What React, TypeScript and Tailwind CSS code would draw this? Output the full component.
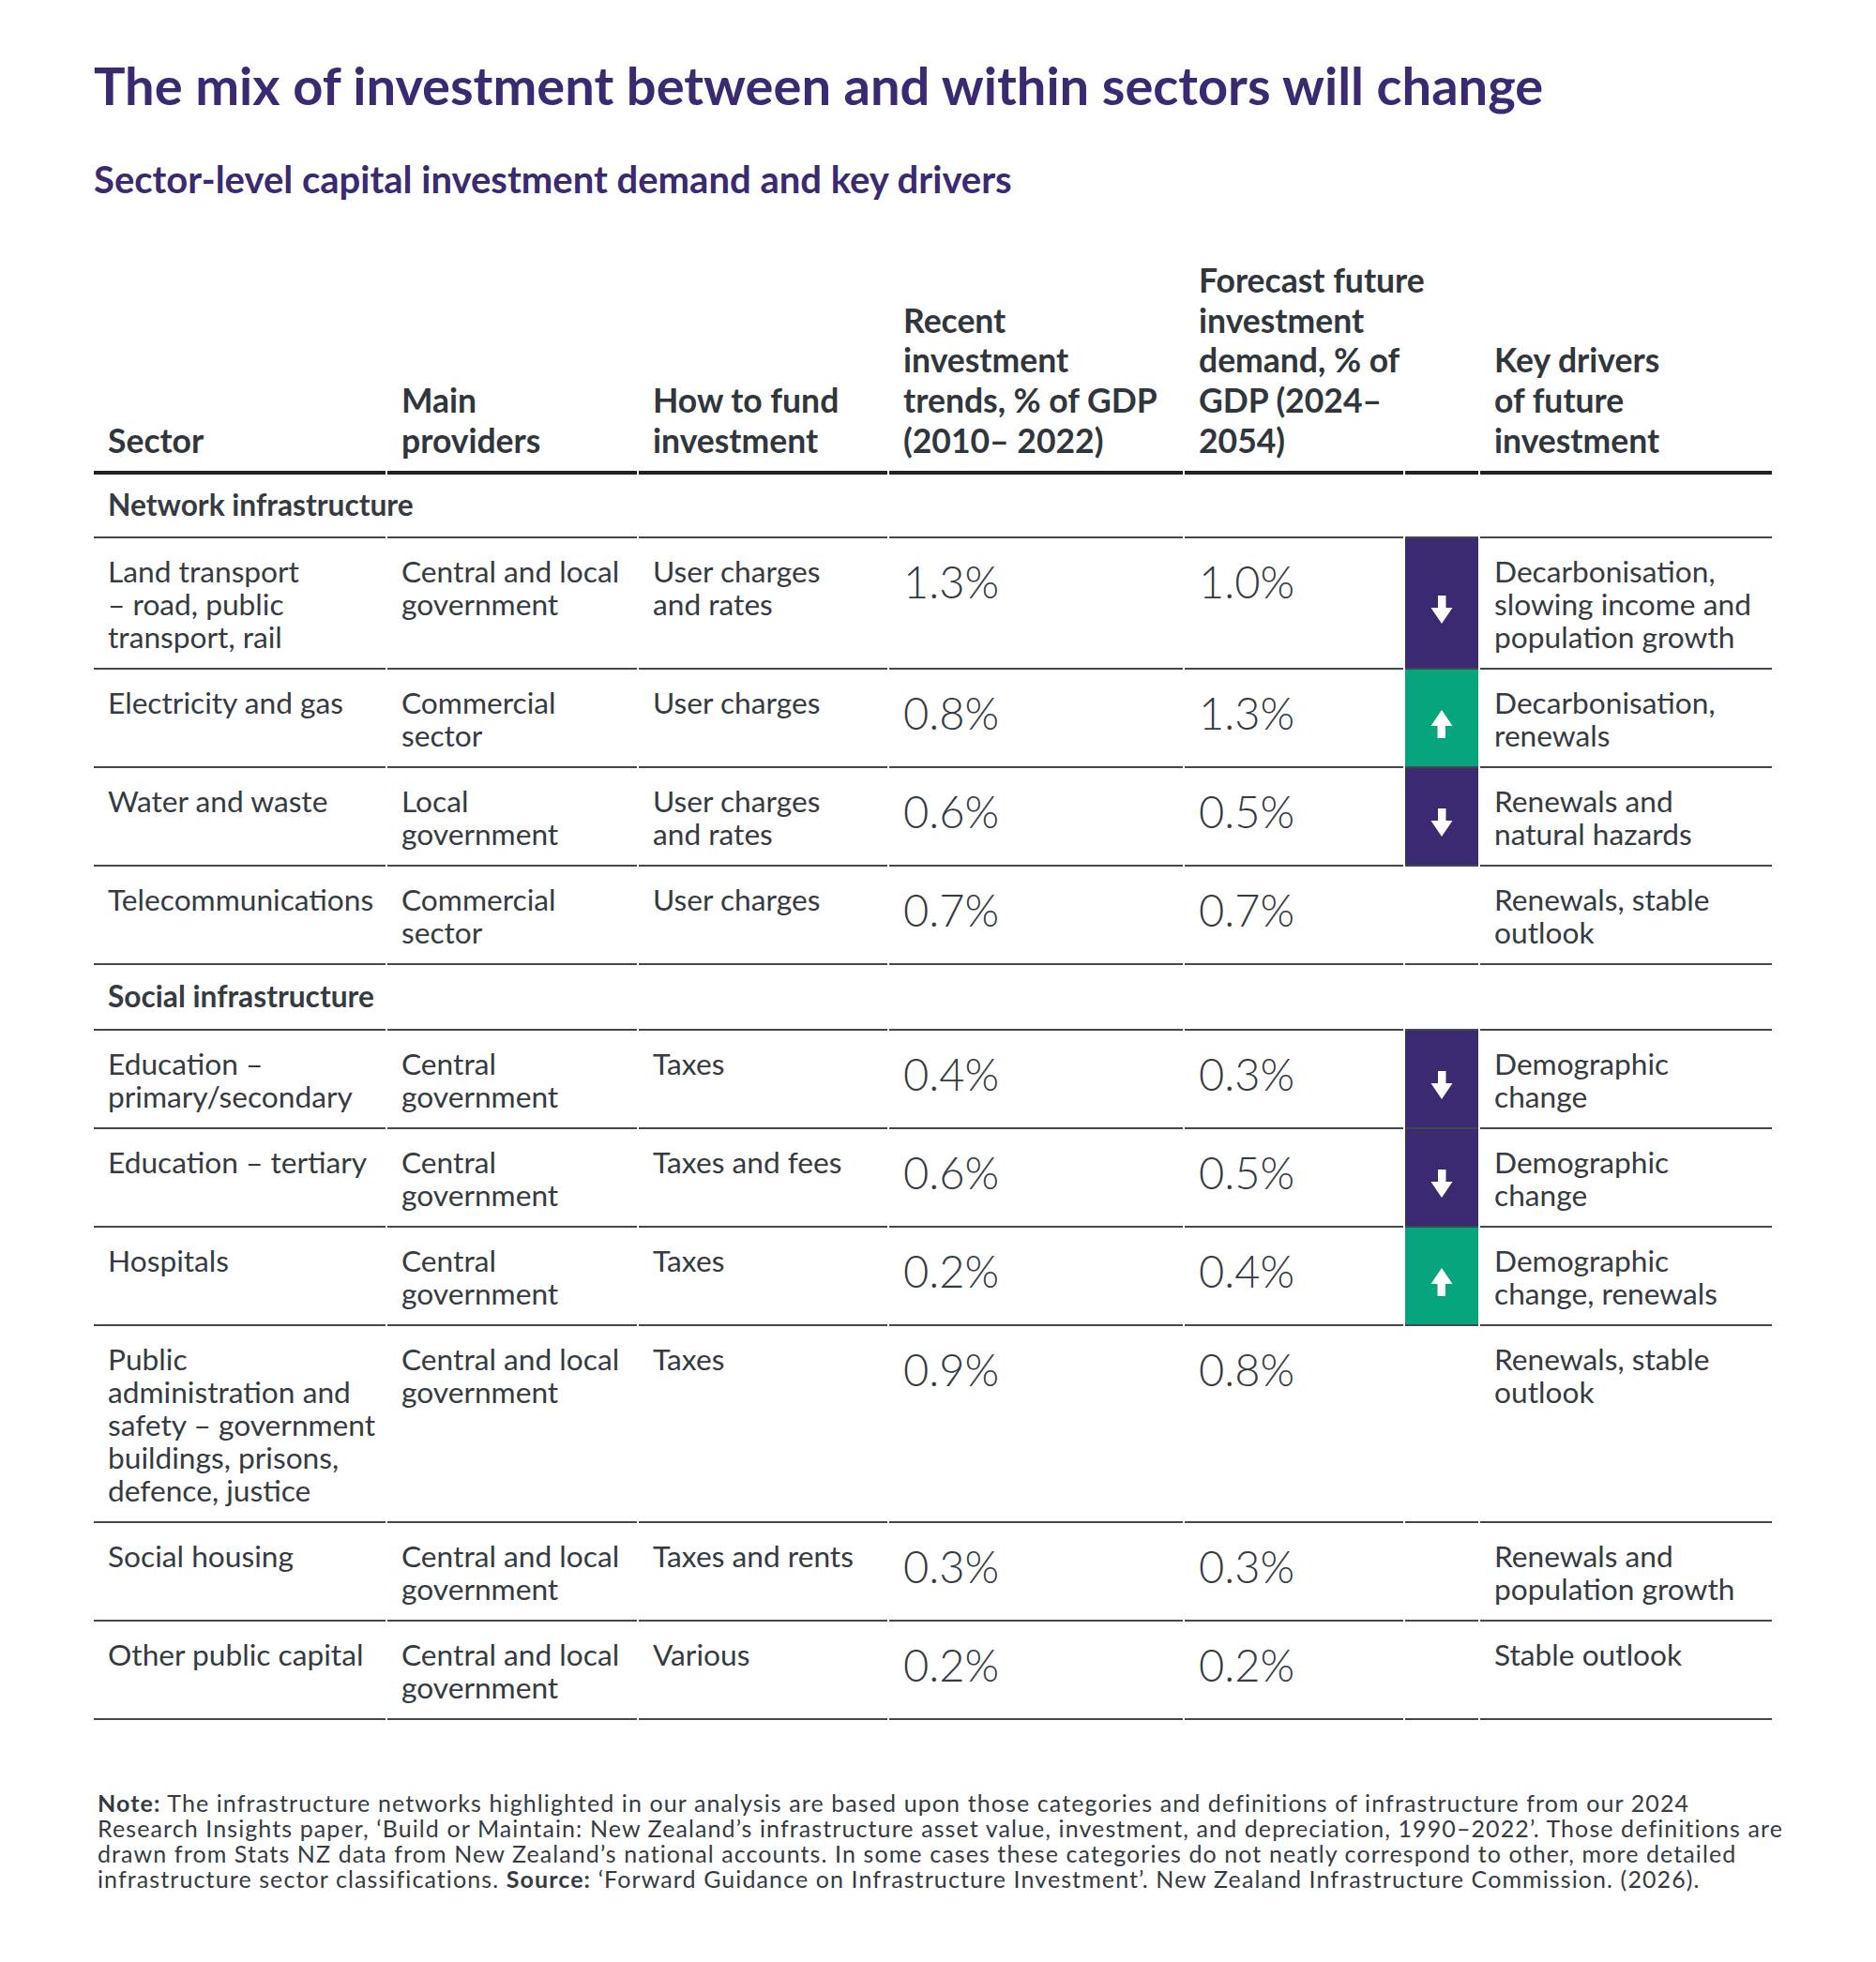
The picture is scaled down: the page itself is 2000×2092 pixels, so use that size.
import React from 'react';

type Trend = 'up' | 'down' | null;

type Row = {
  sector: string[];
  providers: string[];
  fund: string[];
  recent: string;
  forecast: string;
  trend: Trend;
  drivers: string[];
};

const network: Row[] = [
  {
    sector: ['Land transport', '– road, public', 'transport, rail'],
    providers: ['Central and local', 'government'],
    fund: ['User charges', 'and rates'],
    recent: '1.3%',
    forecast: '1.0%',
    trend: 'down',
    drivers: ['Decarbonisation,', 'slowing income and', 'population growth'],
  },
  {
    sector: ['Electricity and gas'],
    providers: ['Commercial', 'sector'],
    fund: ['User charges'],
    recent: '0.8%',
    forecast: '1.3%',
    trend: 'up',
    drivers: ['Decarbonisation,', 'renewals'],
  },
  {
    sector: ['Water and waste'],
    providers: ['Local', 'government'],
    fund: ['User charges', 'and rates'],
    recent: '0.6%',
    forecast: '0.5%',
    trend: 'down',
    drivers: ['Renewals and', 'natural hazards'],
  },
  {
    sector: ['Telecommunications'],
    providers: ['Commercial', 'sector'],
    fund: ['User charges'],
    recent: '0.7%',
    forecast: '0.7%',
    trend: null,
    drivers: ['Renewals, stable', 'outlook'],
  },
];

const social: Row[] = [
  {
    sector: ['Education –', 'primary/secondary'],
    providers: ['Central', 'government'],
    fund: ['Taxes'],
    recent: '0.4%',
    forecast: '0.3%',
    trend: 'down',
    drivers: ['Demographic', 'change'],
  },
  {
    sector: ['Education – tertiary'],
    providers: ['Central', 'government'],
    fund: ['Taxes and fees'],
    recent: '0.6%',
    forecast: '0.5%',
    trend: 'down',
    drivers: ['Demographic', 'change'],
  },
  {
    sector: ['Hospitals'],
    providers: ['Central', 'government'],
    fund: ['Taxes'],
    recent: '0.2%',
    forecast: '0.4%',
    trend: 'up',
    drivers: ['Demographic', 'change, renewals'],
  },
  {
    sector: ['Public', 'administration and', 'safety – government', 'buildings, prisons,', 'defence, justice'],
    providers: ['Central and local', 'government'],
    fund: ['Taxes'],
    recent: '0.9%',
    forecast: '0.8%',
    trend: null,
    drivers: ['Renewals, stable', 'outlook'],
  },
  {
    sector: ['Social housing'],
    providers: ['Central and local', 'government'],
    fund: ['Taxes and rents'],
    recent: '0.3%',
    forecast: '0.3%',
    trend: null,
    drivers: ['Renewals and', 'population growth'],
  },
  {
    sector: ['Other public capital'],
    providers: ['Central and local', 'government'],
    fund: ['Various'],
    recent: '0.2%',
    forecast: '0.2%',
    trend: null,
    drivers: ['Stable outlook'],
  },
];

const headers: string[][] = [
  ['Sector'],
  ['Main', 'providers'],
  ['How to fund', 'investment'],
  ['Recent', 'investment', 'trends, % of GDP', '(2010– 2022)'],
  ['Forecast future', 'investment', 'demand, % of', 'GDP (2024–', '2054)'],
  [],
  ['Key drivers', 'of future', 'investment'],
];

const grid = 'grid grid-cols-[311px_266px_265px_313px_233px_78px_311px] gap-x-[2px]';

function Lines({ lines }: { lines: string[] }) {
  return (
    <>
      {lines.map((l, i) => (
        <span key={i} className="block whitespace-nowrap">
          {l}
        </span>
      ))}
    </>
  );
}

function Arrow({ dir }: { dir: 'up' | 'down' }) {
  return (
    <svg width="24" height="30" viewBox="0 0 24 30" className={dir === 'up' ? 'rotate-180' : ''}>
      <rect x="8" y="0" width="8.5" height="14" fill="#ffffff" />
      <polygon points="0.5,13 23.5,13 12,30" fill="#ffffff" />
    </svg>
  );
}

function SectionRow({ title, tall }: { title: string; tall?: boolean }) {
  const cell = `border-b-2 border-[#41484e] ${tall ? 'h-[70px]' : 'h-[68px]'}`;
  return (
    <div className={grid}>
      <div className={`${cell} pl-[15px] flex items-center font-bold whitespace-nowrap`}>{title}</div>
      <div className={cell} />
      <div className={cell} />
      <div className={cell} />
      <div className={cell} />
      <div className={cell} />
      <div className={cell} />
    </div>
  );
}

function DataRow({ row }: { row: Row }) {
  const cell = 'border-b-2 border-[#41484e] pl-[15px] pt-[18px] pb-[15px]';
  const num = 'border-b-2 border-[#41484e] pl-[15px] pt-[23px] text-[47px] leading-[47px] font-light';
  return (
    <div className={grid}>
      <div className={cell}>
        <Lines lines={row.sector} />
      </div>
      <div className={cell}>
        <Lines lines={row.providers} />
      </div>
      <div className={cell}>
        <Lines lines={row.fund} />
      </div>
      <div className={num}>{row.recent}</div>
      <div className={num}>{row.forecast}</div>
      <div
        className={`border-b-2 border-[#41484e] flex items-center justify-center pt-[14px] ${
          row.trend === 'down' ? 'bg-[#3b2a71]' : row.trend === 'up' ? 'bg-[#07a57e]' : ''
        }`}
      >
        {row.trend && <Arrow dir={row.trend} />}
      </div>
      <div className={cell}>
        <Lines lines={row.drivers} />
      </div>
    </div>
  );
}

export default function App() {
  return (
    <div className="w-[2000px] min-h-[2092px] bg-white font-['Lato',sans-serif] text-[#353b41] pl-[100px] pt-[60px]">
      <h1 className="text-[56px] leading-[62px] font-bold text-[#3b2a72]">
        The mix of investment between and within sectors will change
      </h1>
      <h2 className="mt-[47px] text-[40px] leading-[44px] font-bold text-[#3b2a72]">
        Sector-level capital investment demand and key drivers
      </h2>

      {/* Table */}
      <div className="mt-[65px] w-[1789px] text-[31.7px] leading-[35px]">
        <div className={`${grid} items-end`}>
          {headers.map((h, i) => (
            <div
              key={i}
              className="self-stretch flex flex-col justify-end border-b-4 border-[#222222] pl-[15px] pb-[10px] font-bold text-[35.5px] leading-[42.7px] text-[#30363c]"
            >
              <Lines lines={h} />
            </div>
          ))}
        </div>

        <SectionRow title="Network infrastructure" />
        {network.map((r, i) => (
          <DataRow key={i} row={r} />
        ))}

        <SectionRow title="Social infrastructure" tall />
        {social.map((r, i) => (
          <DataRow key={i} row={r} />
        ))}
      </div>

      {/* Note */}
      <p className="mt-[75px] pl-[4px] text-[25px] leading-[27px] tracking-[1.1px] text-[#353b41]">
        <b>Note:</b> The infrastructure networks highlighted in our analysis are based upon those categories and definitions of infrastructure from our 2024
        <br />
        Research Insights paper, ‘Build or Maintain: New Zealand’s infrastructure asset value, investment, and depreciation, 1990–2022’. Those definitions are
        <br />
        drawn from Stats NZ data from New Zealand’s national accounts. In some cases these categories do not neatly correspond to other, more detailed
        <br />
        infrastructure sector classifications. <b>Source:</b> ‘Forward Guidance on Infrastructure Investment’. New Zealand Infrastructure Commission. (2026).
      </p>
    </div>
  );
}
